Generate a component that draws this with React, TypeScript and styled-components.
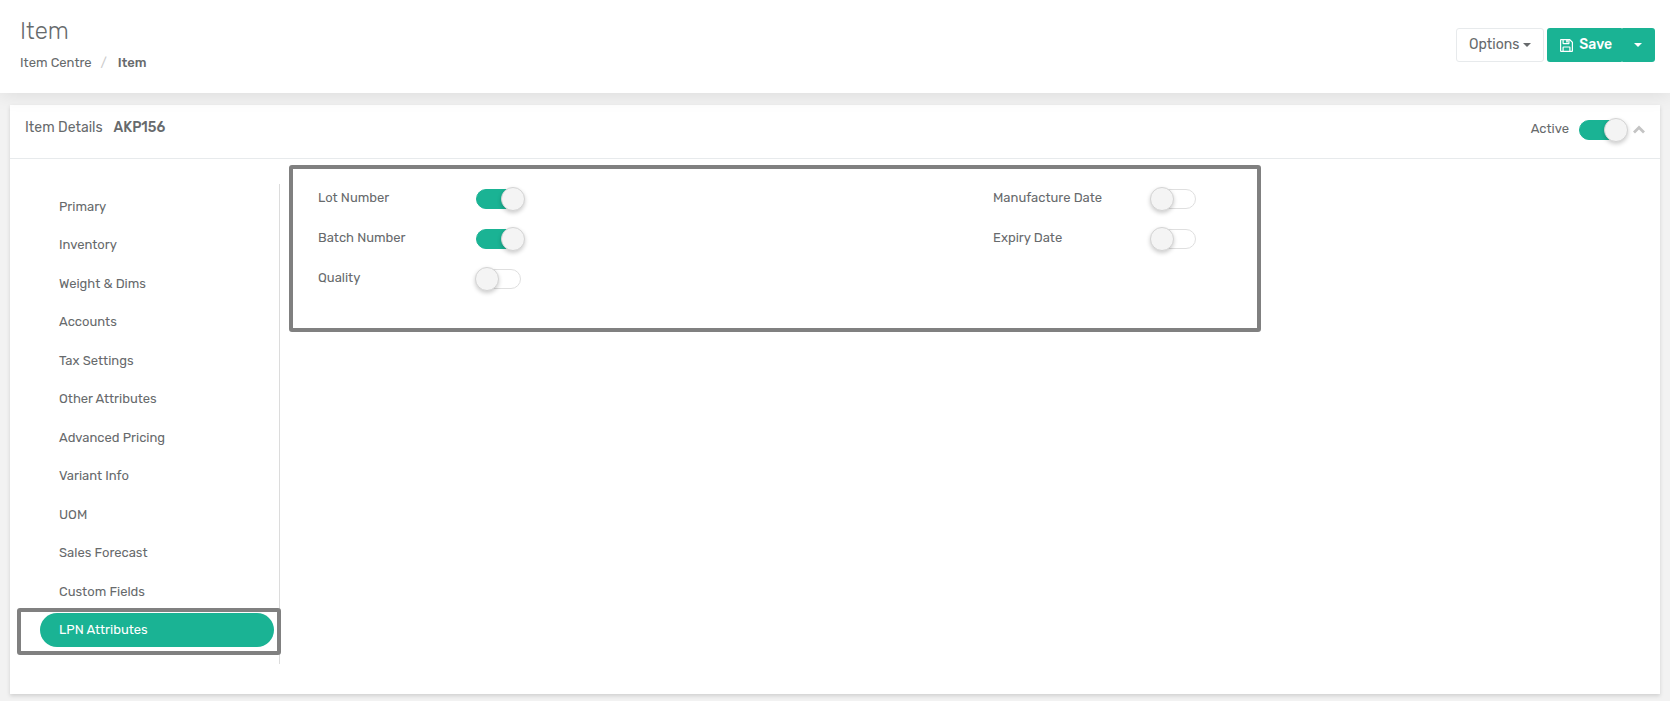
import React, { useState } from 'react';
import styled, { createGlobalStyle, css } from 'styled-components';

const green = '#1ab394';
const text = '#676a6c';
const line = '#e7eaec';

const GlobalStyle = createGlobalStyle`
  *, *::before, *::after { box-sizing: border-box; }
  body {
    margin: 0;
    background: #f2f2f2;
    color: ${text};
    font-family: Rubik, Inter, sans-serif;
    font-size: 13px;
    line-height: 18px;
  }
  button, input { font-family: inherit; }
`;

const Page = styled.div`
  min-height: 100vh;
  padding-bottom: 7px;
`;

const PageHeader = styled.header`
  position: relative;
  z-index: 1;
  display: flex;
  justify-content: space-between;
  align-items: flex-start;
  height: 93px;
  padding: 16px 15px 0 20px;
  background: #fff;
  box-shadow: 0 0 20px rgba(0, 0, 0, 0.11);
`;

const Title = styled.h1`
  margin: 0 0 7px;
  font-size: 24px;
  font-weight: 300;
  line-height: 31px;
`;

const Breadcrumb = styled.ol`
  display: flex;
  margin: 0;
  padding: 0;
  list-style: none;
`;

const Crumb = styled.li`
  & + &::before {
    content: '/';
    padding: 0 11px 0 9px;
    color: #ccc;
    font-weight: 400;
  }
  &[aria-current] { font-weight: 500; }
  a { color: inherit; text-decoration: none; }
`;

const Actions = styled.div`
  display: flex;
  gap: 3px;
  padding-top: 12px;
`;

const buttonBase = css`
  display: flex;
  align-items: center;
  height: 34px;
  font-size: 14px;
  line-height: 20px;
  cursor: pointer;
`;

const OptionsButton = styled.button`
  ${buttonBase}
  gap: 4px;
  padding: 0 12px;
  border: 1px solid ${line};
  border-radius: 3px;
  background: #fff;
  color: ${text};
`;

const SplitButton = styled.div`
  display: flex;
`;

const SaveButton = styled.button`
  ${buttonBase}
  gap: 6px;
  padding: 0 10px 0 13px;
  border: 0;
  border-radius: 3px 1px 1px 3px;
  background: ${green};
  color: #fff;
  font-weight: 500;
`;

const SaveMenuButton = styled.button`
  ${buttonBase}
  padding: 0 13px 0 12px;
  border: 0;
  border-radius: 1px 3px 3px 1px;
  background: ${green};
  color: #fff;
`;

const Caret = styled.span`
  border: 4px solid transparent;
  border-top-color: currentColor;
  border-bottom: 0;
`;

const Card = styled.section`
  margin: 12px 10px 0;
  background: #fff;
  box-shadow: 0 2px 4px rgba(0, 0, 0, 0.14);
`;

const CardHeader = styled.div`
  display: flex;
  justify-content: space-between;
  height: 54px;
  padding: 12px 15px 0;
  border-bottom: 1px solid ${line};
`;

const CardTitle = styled.h2`
  display: flex;
  gap: 11px;
  margin: 0;
  font-size: 14px;
  font-weight: 400;
  line-height: 22px;
  strong { font-weight: 500; }
`;

const CardTools = styled.div`
  display: flex;
  align-items: flex-start;
  gap: 9px;
`;

const SwitchLabel = styled.label<{ $wide?: boolean }>`
  display: grid;
  grid-template-columns: ${p => (p.$wide ? '158px' : 'auto')} auto;
  column-gap: ${p => (p.$wide ? '0' : '10px')};
  justify-content: start;
  align-items: start;
  padding-top: 3px;
  cursor: pointer;
`;

const Switch = styled.input`
  appearance: none;
  position: relative;
  width: 45px;
  height: 20px;
  margin: 0;
  border: 1px solid #dfdfdf;
  border-radius: 10px;
  background: #fff;
  cursor: pointer;

  &::before {
    content: '';
    position: absolute;
    top: -3px;
    left: -2px;
    width: 24px;
    height: 24px;
    border: 1px solid #d4d4d4;
    border-radius: 50%;
    background: #f4f4f4;
    box-shadow: 0 2px 4px rgba(0, 0, 0, 0.2);
  }
  &:checked {
    border-color: ${green};
    background: ${green};
  }
  &:checked::before { left: 24px; }
`;

const CollapseButton = styled.button`
  display: flex;
  padding: 8px 0;
  border: 0;
  background: none;
  color: #c4c4c4;
  cursor: pointer;
`;

const CardBody = styled.div`
  display: grid;
  grid-template-columns: 270px 1fr;
  padding: 25px 7px 30px 0;
`;

const SideNav = styled.nav`
  padding: 6px 5px 17px 30px;
  border-right: 1px solid #dcdcdc;
`;

const NavList = styled.ul`
  display: flex;
  flex-direction: column;
  justify-content: space-between;
  min-height: 457px;
  margin: 0;
  padding: 0;
  list-style: none;
`;

const NavItem = styled.li`
  position: relative;
`;

const NavLink = styled.a<{ $active: boolean }>`
  display: block;
  padding: 8px 19px;
  border-radius: 17px;
  color: ${p => (p.$active ? '#fff' : text)};
  background: ${p => (p.$active ? green : 'transparent')};
  text-decoration: none;
`;

const Callout = styled.div`
  position: absolute;
  border: 4px solid #808080;
  border-radius: 3px;
  pointer-events: none;
`;

const NavCallout = styled(Callout)`
  inset: -5px -7px -8px -23px;
`;

const FieldsCallout = styled(Callout)`
  top: -19px;
  left: -14px;
  width: 72%;
  height: 167px;
`;

const Panel = styled.div`
  padding-left: 23px;
`;

const Fields = styled.div`
  position: relative;
  display: grid;
  grid-template-columns: 1fr 1fr;
`;

const FieldColumn = styled.div`
  display: flex;
  flex-direction: column;
  gap: 17px;
  padding: 2px 15px;
`;

function SaveIcon() {
  return (
    <svg width="13" height="13" viewBox="0 0 13 13" fill="none" stroke="currentColor" strokeWidth="1.2" aria-hidden="true">
      <path d="M1.1.6h8.6l2.7 2.7v8.6a.5.5 0 0 1-.5.5H1.1a.5.5 0 0 1-.5-.5V1.1a.5.5 0 0 1 .5-.5Z" />
      <path d="M3.1.8v3.4a.4.4 0 0 0 .4.4h5a.4.4 0 0 0 .4-.4V.8M3.1 12.2V8.4a.4.4 0 0 1 .4-.4h6a.4.4 0 0 1 .4.4v3.8" />
      <path d="M7 1v2.6" strokeWidth="1.6" />
    </svg>
  );
}

function ChevronUpIcon() {
  return (
    <svg width="12" height="9" viewBox="0 0 12 9" fill="none" stroke="currentColor" strokeWidth="2.8" aria-hidden="true">
      <path d="m1 7.5 5-5 5 5" />
    </svg>
  );
}

function Field({ label, on = false, wide = true }: { label: string; on?: boolean; wide?: boolean }) {
  return (
    <SwitchLabel $wide={wide}>
      <span>{label}</span>
      <Switch type="checkbox" role="switch" defaultChecked={on} />
    </SwitchLabel>
  );
}

const sections = [
  'Primary', 'Inventory', 'Weight & Dims', 'Accounts', 'Tax Settings', 'Other Attributes',
  'Advanced Pricing', 'Variant Info', 'UOM', 'Sales Forecast', 'Custom Fields', 'LPN Attributes',
];

export default function App() {
  const [active, setActive] = useState('LPN Attributes');

  return (
    <Page>
      <GlobalStyle />
      <PageHeader>
        <div>
          <Title>Item</Title>
          <nav aria-label="Breadcrumb">
            <Breadcrumb>
              <Crumb><a href="#centre">Item Centre</a></Crumb>
              <Crumb aria-current="page">Item</Crumb>
            </Breadcrumb>
          </nav>
        </div>
        <Actions>
          <OptionsButton type="button">Options<Caret /></OptionsButton>
          <SplitButton>
            <SaveButton type="button"><SaveIcon />Save</SaveButton>
            <SaveMenuButton type="button" aria-label="More save options"><Caret /></SaveMenuButton>
          </SplitButton>
        </Actions>
      </PageHeader>

      <Card>
        <CardHeader>
          <CardTitle>Item Details <strong>AKP156</strong></CardTitle>
          <CardTools>
            <Field label="Active" on wide={false} />
            <CollapseButton type="button" aria-label="Collapse"><ChevronUpIcon /></CollapseButton>
          </CardTools>
        </CardHeader>
        <CardBody>
          <SideNav aria-label="Item sections">
            <NavList>
              {sections.map(name => (
                <NavItem key={name}>
                  <NavLink
                    href="#section"
                    $active={name === active}
                    aria-current={name === active ? 'true' : undefined}
                    onClick={e => { e.preventDefault(); setActive(name); }}
                  >
                    {name}
                  </NavLink>
                  {name === active && <NavCallout />}
                </NavItem>
              ))}
            </NavList>
          </SideNav>
          <Panel>
            <Fields>
              <FieldColumn>
                <Field label="Lot Number" on />
                <Field label="Batch Number" on />
                <Field label="Quality" />
              </FieldColumn>
              <FieldColumn>
                <Field label="Manufacture Date" />
                <Field label="Expiry Date" />
              </FieldColumn>
              <FieldsCallout />
            </Fields>
          </Panel>
        </CardBody>
      </Card>
    </Page>
  );
}
